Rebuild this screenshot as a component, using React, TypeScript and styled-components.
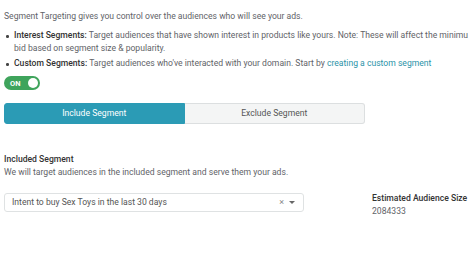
import styled, { createGlobalStyle } from "styled-components";

const Global = createGlobalStyle`
  html, body { margin: 0; padding: 0; background: #fff; }
  body { font-family: Roboto, "Noto Sans", Arial, sans-serif; color: #5f6368; }
`;

const Page = styled.div`
  width: 468px;
  height: 263px;
  overflow: hidden;
  padding: 10px 0 0 4px;
  box-sizing: border-box;
  font-size: 8.6px;
  line-height: 13px;
`;

const Intro = styled.p`
  margin: 0 0 6px;
`;

const List = styled.ul`
  margin: 0;
  padding: 0 0 0 10px;
  list-style: none;
  display: flex;
  flex-direction: column;
  gap: 2px;
`;

const Item = styled.li`
  position: relative;
  width: 470px;
  &::before {
    content: "";
    position: absolute;
    left: -8px;
    top: 6px;
    width: 2.5px;
    height: 2.5px;
    border-radius: 50%;
    background: #444;
  }
`;

const Strong = styled.b`
  font-weight: 500;
  color: #333;
`;

const Link = styled.a`
  color: #2b93a8;
  text-decoration: none;
`;

const Toggle = styled.div`
  margin-top: 6px;
  width: 36px;
  height: 14px;
  border-radius: 7px;
  background: #3fa45c;
  display: flex;
  align-items: center;
  justify-content: space-between;
  padding: 0 2px 0 6px;
  box-sizing: border-box;
  color: #fff;
  font-size: 7.5px;
  font-weight: 700;
`;

const Knob = styled.span`
  width: 10px;
  height: 10px;
  border-radius: 50%;
  background: #fff;
`;

const Tabs = styled.div`
  margin-top: 13px;
  width: 361px;
  height: 21px;
  display: grid;
  grid-template-columns: 1fr 1fr;
`;

const Tab = styled.div<{ $active?: boolean }>`
  display: flex;
  align-items: center;
  justify-content: center;
  font-size: 8.6px;
  border-radius: ${(p) => (p.$active ? "3px 0 0 3px" : "0 3px 3px 0")};
  background: ${(p) => (p.$active ? "#2b9bb5" : "#f4f5f5")};
  color: ${(p) => (p.$active ? "#fff" : "#555")};
  border: 1px solid ${(p) => (p.$active ? "#2b9bb5" : "#dcdfe0")};
  border-left: ${(p) => (p.$active ? "1px solid #2b9bb5" : "none")};
`;

const Heading = styled.div`
  margin-top: 29px;
  font-weight: 500;
  color: #333;
`;

const Desc = styled.div``;

const Row = styled.div`
  margin-top: 14px;
  display: flex;
  align-items: flex-start;
  gap: 68px;
`;

const Select = styled.div`
  width: 300px;
  height: 19px;
  box-sizing: border-box;
  border: 1px solid #dfe2e3;
  border-radius: 3px;
  display: flex;
  align-items: center;
  padding: 0 8px 0 7px;
  color: #555;
`;

const Value = styled.span`
  flex: 1;
`;

const Clear = styled.span`
  color: #888;
  font-size: 9px;
  margin-right: 5px;
`;

const Caret = styled.span`
  width: 0;
  height: 0;
  border-left: 3px solid transparent;
  border-right: 3px solid transparent;
  border-top: 3.5px solid #666;
`;

const Estimate = styled.div`
  margin-top: -1px;
`;

export default function App() {
  return (
    <Page>
      <Global />
      <Intro>Segment Targeting gives you control over the audiences who will see your ads.</Intro>
      <List>
        <Item>
          <Strong>Interest Segments:</Strong> Target audiences that have shown interest in products like yours. Note: These will affect the minimum bid based on segment size &amp; popularity.
        </Item>
        <Item>
          <Strong>Custom Segments:</Strong> Target audiences who've interacted with your domain. Start by{" "}
          <Link href="#">creating a custom segment</Link>
        </Item>
      </List>
      <Toggle>
        ON <Knob />
      </Toggle>
      <Tabs>
        <Tab $active>Include Segment</Tab>
        <Tab>Exclude Segment</Tab>
      </Tabs>
      <Heading>Included Segment</Heading>
      <Desc>We will target audiences in the included segment and serve them your ads.</Desc>
      <Row>
        <Select>
          <Value>Intent to buy Sex Toys in the last 30 days</Value>
          <Clear>×</Clear>
          <Caret />
        </Select>
        <Estimate>
          <Strong>Estimated Audience Size</Strong>
          <div>2084333</div>
        </Estimate>
      </Row>
    </Page>
  );
}
